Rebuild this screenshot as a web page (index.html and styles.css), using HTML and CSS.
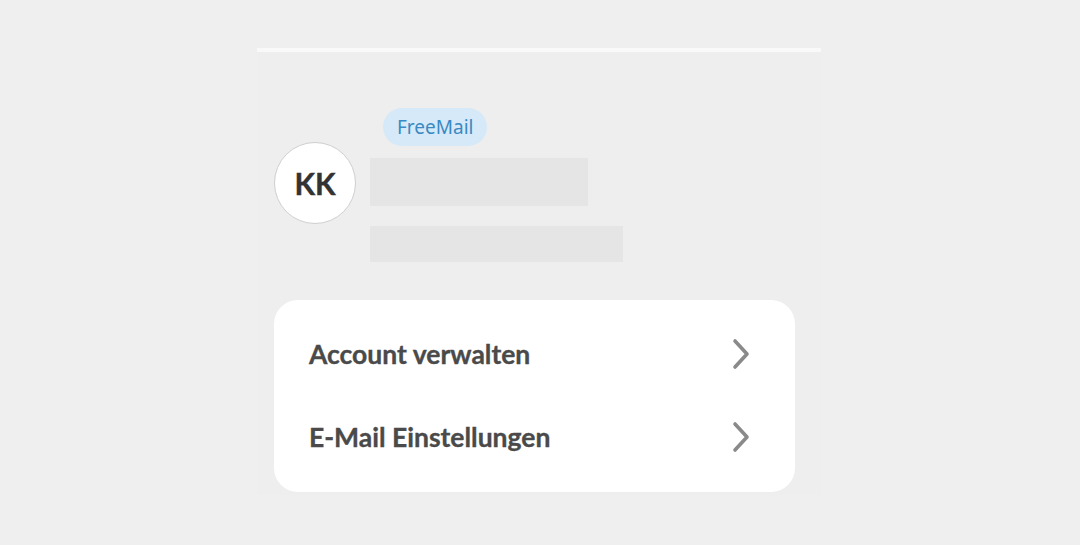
FILE: index.html
```html
<!DOCTYPE html>
<html lang="de">
<head>
<meta charset="utf-8">
<title>Konto</title>
<link rel="stylesheet" href="styles.css">
</head>
<body>
<div class="sheet">
  <div class="topline"></div>
  <div class="panel">
    <div class="profile">
      <div class="avatar">KK</div>
      <div class="info">
        <span class="pill">FreeMail</span>
        <div class="skel skel-name"></div>
        <div class="skel skel-mail"></div>
      </div>
    </div>
    <div class="card">
      <a class="row" href="#">
        <span class="label">Account verwalten</span>
        <svg class="chev" width="18" height="32" viewBox="0 0 18 32"><path d="M3 3 L15 16 L3 29" fill="none" stroke="#8a8a8a" stroke-width="3.6" stroke-linecap="round" stroke-linejoin="round"/></svg>
      </a>
      <a class="row" href="#">
        <span class="label">E-Mail Einstellungen</span>
        <svg class="chev" width="18" height="32" viewBox="0 0 18 32"><path d="M3 3 L15 16 L3 29" fill="none" stroke="#8a8a8a" stroke-width="3.6" stroke-linecap="round" stroke-linejoin="round"/></svg>
      </a>
    </div>
  </div>
</div>
</body>
</html>
```

FILE: styles.css
```css
html, body {
  margin: 0;
  padding: 0;
  background: #efefef;
}
body {
  font-family: "Noto Sans", sans-serif;
}
.sheet {
  width: 564px;
  margin: 48px 0 0 257px;
}
.topline {
  height: 4px;
  background: #f9f9f9;
}
.panel {
  background: #eeeeee;
  height: 443px;
  padding: 0 17px;
  display: flex;
  flex-direction: column;
}
.profile {
  display: flex;
  align-items: flex-start;
  padding-top: 56px;
}
.avatar {
  width: 80px;
  height: 80px;
  margin-top: 34px;
  border-radius: 50%;
  background: #ffffff;
  border: 1px solid #cfcfcf;
  display: flex;
  align-items: center;
  justify-content: center;
  font-family: Lato, "Noto Sans", sans-serif;
  font-weight: bold;
  font-size: 30px;
  -webkit-text-stroke: 0.4px #333333;
  color: #333333;
  flex: none;
}
.info {
  margin-left: 14px;
  display: flex;
  flex-direction: column;
  align-items: flex-start;
}
.pill {
  margin-left: 13px;
  height: 38px;
  padding: 0 14px;
  border-radius: 19px;
  background: #d5e9f8;
  color: #3a89c2;
  font-size: 19px;
  line-height: 38px;
}
.skel {
  background: #e5e5e5;
}
.skel-name {
  width: 218px;
  height: 48px;
  margin-top: 12px;
}
.skel-mail {
  width: 253px;
  height: 36px;
  margin-top: 20px;
}
.card {
  margin-top: 38px;
  width: 521px;
  background: #ffffff;
  border-radius: 24px;
  padding: 12px 0 14px;
}
.row {
  display: flex;
  align-items: center;
  justify-content: space-between;
  height: 83px;
  padding: 0 45px 0 35px;
  text-decoration: none;
}
.label {
  font-family: Lato, "Noto Sans", sans-serif;
  font-weight: bold;
  font-size: 26.5px;
  -webkit-text-stroke: 0.35px #4a4a4a;
  color: #4a4a4a;
}
.chev {
  display: block;
}
```
